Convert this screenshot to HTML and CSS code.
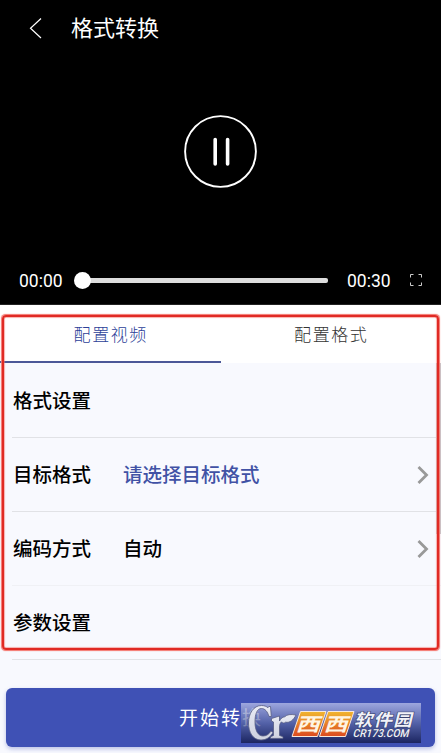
FILE: index.html
```html
<!DOCTYPE html>
<html lang="zh-CN">
<head>
<meta charset="utf-8">
<title>格式转换</title>
<link rel="stylesheet" href="styles.css">
</head>
<body>
<main class="screen">
  <section class="player">
    <header class="titlebar">
      <svg class="back" width="14" height="24" viewBox="0 0 14 24"><path d="M13 2.500 2.500 12.200 13 22" fill="none" stroke="#fff" stroke-width="1.200"/></svg>
      <h1 class="title">格式转换</h1>
    </header>
    <div class="stage">
      <svg width="74" height="74" viewBox="0 0 74 74" fill="none" stroke="#fff"><circle cx="36.500" cy="37.500" r="35.400" stroke-width="1.900"/><path d="M31.200 25.500v24.500M43.600 25.500v24.500" stroke-width="3.600" stroke-linecap="round"/></svg>
    </div>
    <div class="controls">
      <span class="time">00:00</span>
      <div class="track"><span class="knob"></span></div>
      <span class="time">00:30</span>
      <svg class="full" width="12" height="12" viewBox="0 0 12 12"><path d="M.5 3.500v-3h3M8.500.5h3v3M11.500 8.500v3h-3M3.500 11.500h-3v-3" fill="none" stroke="#ccc" stroke-width="1"/></svg>
    </div>
  </section>
  <nav class="tabs">
    <span class="tab active">配置视频</span>
    <span class="tab">配置格式</span>
  </nav>
  <section class="rows">
    <div class="row"><span class="label">格式设置</span></div>
    <div class="row">
      <span class="label">目标格式</span><span class="value link">请选择目标格式</span>
      <svg class="chev" width="12" height="20" viewBox="0 0 12 20"><path d="M1.500 2 9.500 10l-8 8" fill="none" stroke="#999" stroke-width="2.800"/></svg>
    </div>
    <div class="row faint">
      <span class="label">编码方式</span><span class="value">自动</span>
      <svg class="chev" width="12" height="20" viewBox="0 0 12 20"><path d="M1.500 2 9.500 10l-8 8" fill="none" stroke="#999" stroke-width="2.800"/></svg>
    </div>
    <div class="row"><span class="label">参数设置</span></div>
  </section>
  <div class="action"><button class="start">开始转换</button></div>
  <div class="scrollbar"></div>
  <div class="highlight"></div>
  <svg class="badge" width="180" height="40" viewBox="0 0 180 40">
    <defs>
      <linearGradient id="sky" x2="0" y2="1"><stop offset="0" stop-color="#bcc3ec"/><stop offset=".5" stop-color="#5a67a4"/><stop offset="1" stop-color="#101745"/></linearGradient>
      <linearGradient id="tile" x2="0" y2="1"><stop offset="0" stop-color="#f1b62f"/><stop offset="1" stop-color="#dc4a20"/></linearGradient>
      <linearGradient id="silver" x2="0" y2="1"><stop offset="0" stop-color="#e9ebf4"/><stop offset="1" stop-color="#cfd2df"/></linearGradient>
    </defs>
    <rect width="180" height="40" fill="url(#sky)" fill-opacity=".75"/>
    <g fill="url(#silver)" stroke="#555c83" stroke-width=".8" stroke-linejoin="round">
      <path d="M29.500 3.500l.8 10h-2.300C26.500 8.500 24 5.500 20.500 5.500c-4.700 0-6.500 6-6.500 13.500C14 27.500 17 33 22 33c3.500 0 6-1.800 8-5l2 1.500C29.500 34 25.500 37 20 37 12 37 7.500 29.500 7.500 20S12.500 2.500 20.500 2.500c3 0 5 1 6.500 2.200l.8-1.200z"/>
      <path d="M30.500 15.500 38.500 13v5c1.300-2.500 3-4 5.200-4.200C46 11.500 49.500 11 55 12c-2.500 5.200-6.200 8-10.500 7.200-1.500 1.300-3.200 1-4-.4-1.200 1.200-2 2.700-2 5.200V32.500l3.500 1.200v1.700H29.500v-1.700l3-1.200V19l-2-1z"/>
    </g>
    <g fill="url(#tile)" stroke="#f8e8dc" stroke-width="1" stroke-linejoin="round">
      <path d="M59.500 8.500h25.500l-8.500 25H51z"/>
      <path d="M87 8.500h26l-8.500 25H78.500z"/>
    </g>
    <g class="xixi"><text transform="translate(54.500 27.800) skewX(-18) scale(1.140 .88)">西</text><text transform="translate(82.500 27.800) skewX(-18) scale(1.140 .88)">西</text></g>
    <text class="soft" transform="translate(113 23) skewX(-14) scale(1.090 1)">软件园</text>
    <text class="site" transform="translate(111.500 33.800) skewX(-14)" textLength="56" lengthAdjust="spacingAndGlyphs">CR173.COM</text>
  </svg>
</main>
</body>
</html>
```
FILE: styles.css
```css
* { box-sizing: border-box; }
body { margin: 0; background: #f8f9fe; font-family: Roboto, "Noto Sans CJK SC", sans-serif; color: #000; }
.screen { position: relative; width: 441px; height: 753px; overflow: hidden; background: #f8f9fe; }
.player { display: flex; flex-direction: column; height: 305px; background: #000; color: #fff; border-bottom: 1px solid #222; }
.titlebar { display: flex; align-items: center; height: 56px; padding-left: 28px; }
.title { margin: 0 0 0 29px; padding-top: 2px; font-size: 22px; line-height: 32px; font-weight: 400; }
.stage { display: flex; flex: 1; justify-content: center; padding-top: 58px; }
.controls { display: flex; align-items: center; height: 48px; padding-left: 19px; }
.time { width: 44px; padding-top: 1px; font-size: 17.500px; line-height: 24px; }
.track { position: relative; width: 245px; height: 5px; margin: 0 19px 0 20px; border-radius: 2px; background: #ddd; }
.knob { position: absolute; left: -9px; top: -6px; width: 17px; height: 17px; border-radius: 50%; background: #fff; }
.full { margin-left: 19px; }
.tabs { display: grid; grid-template-columns: 1fr 1fr; height: 58px; background: #fff; }
.tab { padding: 17px 0 0 1px; font-size: 17px; line-height: 26px; font-weight: 300; letter-spacing: 1.600px; text-align: center; color: #333; }
.active { color: #2c3f98; border-bottom: 2px solid #4c5898; }
.rows { padding: 1px 0 0 12px; }
.row { display: flex; align-items: center; height: 74.100px; padding-right: 12px; border-bottom: 1px solid #e1e2e6; font-size: 19.500px; line-height: 30px; font-weight: 500; }
.faint { border-color: #f0f1f5; }
.label { width: 111px; padding: 2px 0 0 1px; }
.value { padding-top: 2px; }
.link { color: #4152a5; }
.chev { margin-left: auto; }
.action { padding: 27.600px 6px 0; }
.start { display: block; width: 100%; height: 59px; padding: 3px 0 0 1px; border: 0; border-radius: 6px; background: #3f51b5; box-shadow: 0 2px 4px #3f51b555; color: #fff; font: 400 19px/28px Roboto, "Noto Sans CJK SC", sans-serif; letter-spacing: 2px; }
.scrollbar { position: absolute; right: 0; top: 363px; width: 5px; height: 171px; background: #c8c9ce; }
.highlight { position: absolute; left: 2px; top: 315px; width: 437px; height: 335px; border: 2px solid #e02a24; border-radius: 4px; box-shadow: 0 0 1px .5px #f4746c, inset 0 0 1px .5px #f4746c; }
.badge { position: absolute; left: 241px; top: 703px; }
.badge text { font-family: "Noto Sans CJK SC", sans-serif; }
.xixi { fill: #fff4e2; font-size: 21px; font-weight: 700; }
.badge .soft { font-size: 17px; font-weight: 700; letter-spacing: 1px; fill: #f1f2f8; stroke: #39436f; stroke-width: 1.200px; paint-order: stroke; }
.badge .site { font-family: Roboto, sans-serif; font-size: 11px; font-weight: 500; fill: #f1f2f8; stroke: #39436f; stroke-width: 1px; paint-order: stroke; }
```
